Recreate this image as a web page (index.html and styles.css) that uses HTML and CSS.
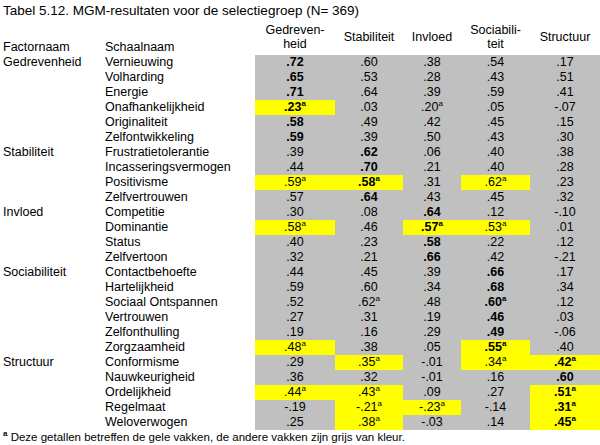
FILE: index.html
```html
<!DOCTYPE html>
<html>
<head>
<meta charset="utf-8">
<link rel="stylesheet" href="styles.css">
</head>
<body>
<div class="title">Tabel 5.12. MGM-resultaten voor de selectiegroep (N= 369)</div>
<table class="mgm">
<colgroup>
<col class="c-factor"><col class="c-scale"><col class="c1"><col class="c2"><col class="c3"><col class="c4"><col class="c5">
</colgroup>
<thead>
<tr class="head">
<th class="lab">Factornaam</th><th class="lab">Schaalnaam</th>
<th>Gedreven-<br>heid</th><th>Stabiliteit</th><th>Invloed</th><th>Sociabili-<br>teit</th><th>Structuur</th>
</tr>
</thead>
<tbody>
<tr><td class="f">Gedrevenheid</td><td class="s">Vernieuwing</td><td class="b">.72</td><td>.60</td><td>.38</td><td>.54</td><td>.17</td></tr>
<tr><td class="f"></td><td class="s">Volharding</td><td class="b">.65</td><td>.53</td><td>.28</td><td>.43</td><td>.51</td></tr>
<tr><td class="f"></td><td class="s">Energie</td><td class="b">.71</td><td>.64</td><td>.39</td><td>.59</td><td>.41</td></tr>
<tr><td class="f"></td><td class="s">Onafhankelijkheid</td><td class="b y">.23<sup>a</sup></td><td>.03</td><td>.20<sup>a</sup></td><td>.05</td><td>-.07</td></tr>
<tr><td class="f"></td><td class="s">Originaliteit</td><td class="b">.58</td><td>.49</td><td>.42</td><td>.45</td><td>.15</td></tr>
<tr><td class="f"></td><td class="s">Zelfontwikkeling</td><td class="b">.59</td><td>.39</td><td>.50</td><td>.43</td><td>.30</td></tr>

<tr><td class="f">Stabiliteit</td><td class="s">Frustratietolerantie</td><td>.39</td><td class="b">.62</td><td>.06</td><td>.40</td><td>.38</td></tr>
<tr><td class="f"></td><td class="s">Incasseringsvermogen</td><td>.44</td><td class="b">.70</td><td>.21</td><td>.40</td><td>.28</td></tr>
<tr><td class="f"></td><td class="s">Positivisme</td><td class="y">.59<sup>a</sup></td><td class="b y">.58<sup>a</sup></td><td>.31</td><td class="y">.62<sup>a</sup></td><td>.23</td></tr>
<tr><td class="f"></td><td class="s">Zelfvertrouwen</td><td>.57</td><td class="b">.64</td><td>.43</td><td>.45</td><td>.32</td></tr>

<tr><td class="f">Invloed</td><td class="s">Competitie</td><td>.30</td><td>.08</td><td class="b">.64</td><td>.12</td><td>-.10</td></tr>
<tr><td class="f"></td><td class="s">Dominantie</td><td class="y">.58<sup>a</sup></td><td>.46</td><td class="b y">.57<sup>a</sup></td><td class="y">.53<sup>a</sup></td><td>.01</td></tr>
<tr><td class="f"></td><td class="s">Status</td><td>.40</td><td>.23</td><td class="b">.58</td><td>.22</td><td>.12</td></tr>
<tr><td class="f"></td><td class="s">Zelfvertoon</td><td>.32</td><td>.21</td><td class="b">.66</td><td>.42</td><td>-.21</td></tr>

<tr><td class="f">Sociabiliteit</td><td class="s">Contactbehoefte</td><td>.44</td><td>.45</td><td>.39</td><td class="b">.66</td><td>.17</td></tr>
<tr><td class="f"></td><td class="s">Hartelijkheid</td><td>.59</td><td>.60</td><td>.34</td><td class="b">.68</td><td>.34</td></tr>
<tr><td class="f"></td><td class="s">Sociaal Ontspannen</td><td>.52</td><td>.62<sup>a</sup></td><td>.48</td><td class="b">.60<sup>a</sup></td><td>.12</td></tr>
<tr><td class="f"></td><td class="s">Vertrouwen</td><td>.27</td><td>.31</td><td>.19</td><td class="b">.46</td><td>.03</td></tr>
<tr><td class="f"></td><td class="s">Zelfonthulling</td><td>.19</td><td>.16</td><td>.29</td><td class="b">.49</td><td>-.06</td></tr>
<tr><td class="f"></td><td class="s">Zorgzaamheid</td><td class="y">.48<sup>a</sup></td><td>.38</td><td>.05</td><td class="b y">.55<sup>a</sup></td><td>.40</td></tr>

<tr><td class="f">Structuur</td><td class="s">Conformisme</td><td>.29</td><td class="y">.35<sup>a</sup></td><td>-.01</td><td class="y">.34<sup>a</sup></td><td class="b y">.42<sup>a</sup></td></tr>
<tr><td class="f"></td><td class="s">Nauwkeurigheid</td><td>.36</td><td>.32</td><td>-.01</td><td>.16</td><td class="b">.60</td></tr>
<tr><td class="f"></td><td class="s">Ordelijkheid</td><td class="y">.44<sup>a</sup></td><td class="y">.43<sup>a</sup></td><td>.09</td><td>.27</td><td class="b y">.51<sup>a</sup></td></tr>
<tr><td class="f"></td><td class="s">Regelmaat</td><td>-.19</td><td class="y">-.21<sup>a</sup></td><td class="y">-.23<sup>a</sup></td><td>-.14</td><td class="b y">.31<sup>a</sup></td></tr>
<tr><td class="f"></td><td class="s">Weloverwogen</td><td>.25</td><td class="y">.38<sup>a</sup></td><td>-.03</td><td>.14</td><td class="b y">.45<sup>a</sup></td></tr>
</tbody>
</table>
<div class="note"><sup>a</sup> Deze getallen betreffen de gele vakken, de andere vakken zijn grijs van kleur.</div>
</body>
</html>
```
FILE: styles.css
```css
html, body {
  margin: 0;
  padding: 0;
  background: #fff;
}
body {
  font-family: "Liberation Sans", Arial, sans-serif;
  font-size: 12.5px;
  color: #000;
  width: 600px;
  overflow: hidden;
}
.title {
  margin-top: 3px;
  padding-left: 3px;
  font-size: 13.5px;
  line-height: 15px;
  height: 15px;
  white-space: nowrap;
}
.mgm {
  border-collapse: collapse;
  table-layout: fixed;
  width: 600px;
}
.c-factor { width: 105px; }
.c-scale { width: 150px; }
.c1 { width: 80px; }
.c2 { width: 68px; }
.c3 { width: 58px; }
.c4 { width: 69px; }
.c5 { width: 70px; }
.mgm th, .mgm td {
  padding: 0;
  white-space: nowrap;
}
.head {
  height: 37px;
}
.head th {
  font-weight: normal;
  line-height: 14px;
  text-align: center;
  vertical-align: middle;
}
.head th.lab {
  text-align: left;
  vertical-align: bottom;
  line-height: 15px;
}
.head th.lab:first-child { padding-left: 3px; }
.mgm tbody tr {
  height: 15px;
}
.mgm tbody td {
  line-height: 15px;
  height: 15px;
  text-align: center;
  background: #c0c0c0;
}
.mgm tbody td.f {
  background: transparent;
  text-align: left;
  padding-left: 3px;
}
.mgm tbody td.s {
  background: transparent;
  text-align: left;
}
.mgm tbody td.b { font-weight: bold; }
.mgm tbody td.y { background: #ffff00; }
sup {
  font-size: 8px;
  line-height: 0;
  vertical-align: 5px;
}
.note {
  padding-left: 3px;
  font-size: 11.5px;
  line-height: 15px;
  white-space: nowrap;
}
.note sup {
  font-weight: bold;
}
```
